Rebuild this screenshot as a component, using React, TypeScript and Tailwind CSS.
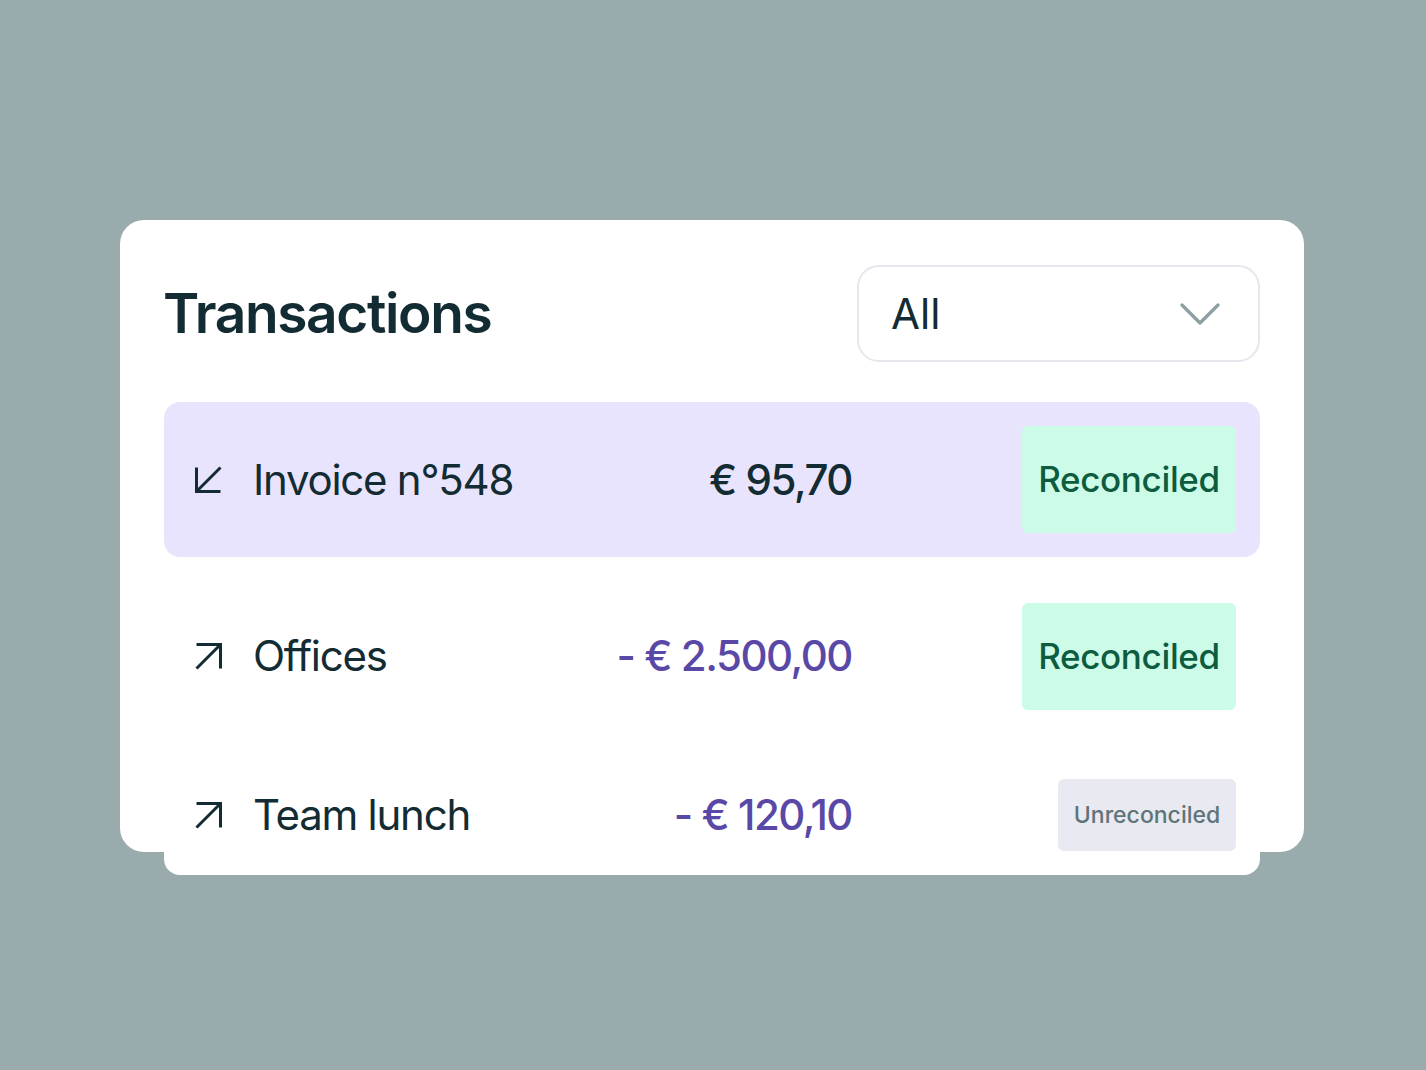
interface Transaction {
  id: string
  label: string
  amount: string
  incoming: boolean
  reconciled: boolean
  active?: boolean
}

const transactions: Transaction[] = [
  { id: "t1", label: "Invoice n°548", amount: "€ 95,70", incoming: true, reconciled: true, active: true },
  { id: "t2", label: "Offices", amount: "- € 2.500,00", incoming: false, reconciled: true },
  { id: "t3", label: "Team lunch", amount: "- € 120,10", incoming: false, reconciled: false },
]

const ChevronDown = () => (
  <svg width="40" height="24" viewBox="0 0 40 24" fill="none">
    <path d="M2 3 L20 21 L38 3" stroke="#8d9fa2" strokeWidth="3.2" strokeLinecap="round" strokeLinejoin="round" />
  </svg>
)

// 矢印アイコン（入金 / 出金）
const Arrow = ({ incoming }: { incoming: boolean }) => (
  <svg width="27" height="27" viewBox="0 0 27 27" fill="none" className="shrink-0">
    {incoming ? (
      <>
        <path d="M1.5 1.5 V25.5 H25.5" stroke="#132b33" strokeWidth="3" strokeLinejoin="miter" />
        <path d="M25.5 1.5 L2.5 24.5" stroke="#132b33" strokeWidth="3" />
      </>
    ) : (
      <>
        <path d="M1.5 1.5 H25.5 V25.5" stroke="#132b33" strokeWidth="3" strokeLinejoin="miter" />
        <path d="M24.5 2.5 L1.5 25.5" stroke="#132b33" strokeWidth="3" />
      </>
    )}
  </svg>
)

const Row = ({ tx }: { tx: Transaction }) => {
  const rowClass = tx.active
    ? "bg-[#e8e4fd] h-[155px]"
    : tx.reconciled
    ? "bg-white h-[158px]"
    : "bg-white h-[120px]"

  return (
    <div className={`flex items-center pl-[31px] pr-6 rounded-2xl ${rowClass}`}>
      <Arrow incoming={tx.incoming} />
      <div className="flex items-center w-[599px] ml-[31px]">
        <span className="flex-1 text-[42px] leading-none text-[#132b33] tracking-[-0.03em]">{tx.label}</span>
        <span
          className={`text-[42px] leading-none tracking-[-0.035em] font-medium ${
            tx.active ? "text-[#132b33]" : "text-[#5a48a6]"
          }`}
        >
          {tx.amount}
        </span>
      </div>
      <div className="flex-1" />
      {tx.reconciled ? (
        <div className="h-[107px] w-[214px] rounded-md bg-[#ccfce8] flex items-center justify-center text-[35px] font-medium text-[#0d5c40] tracking-[-0.01em]">
          Reconciled
        </div>
      ) : (
        <div className="h-[72px] w-[178px] rounded-md bg-[#e8e9f1] flex items-center justify-center text-[23px] font-medium text-[#5f7478]">
          Unreconciled
        </div>
      )}
    </div>
  )
}

export default function App() {
  return (
    <div className="min-h-screen w-full bg-[#9aabad] flex items-start pl-[120px] pt-[220px] font-['Inter',sans-serif]">
      <div className="w-[1184px] h-[632px] bg-white rounded-[24px] px-[44px] pt-[45px]">
        <div className="flex items-center justify-between">
          <h1 className="text-[55px] leading-none font-semibold text-[#132b33] tracking-[-0.025em] -ml-[1px]">
            Transactions
          </h1>
          <div className="w-[403px] h-[97px] border-2 border-[#e6e7ec] rounded-[22px] flex items-center justify-between pl-[32px] pr-[38px]">
            <span className="text-[42px] leading-none text-[#132b33]">All</span>
            <ChevronDown />
          </div>
        </div>
        <div className="mt-[40px] flex flex-col gap-[20px]">
          {transactions.map((tx) => (
            <Row key={tx.id} tx={tx} />
          ))}
        </div>
      </div>
    </div>
  )
}
